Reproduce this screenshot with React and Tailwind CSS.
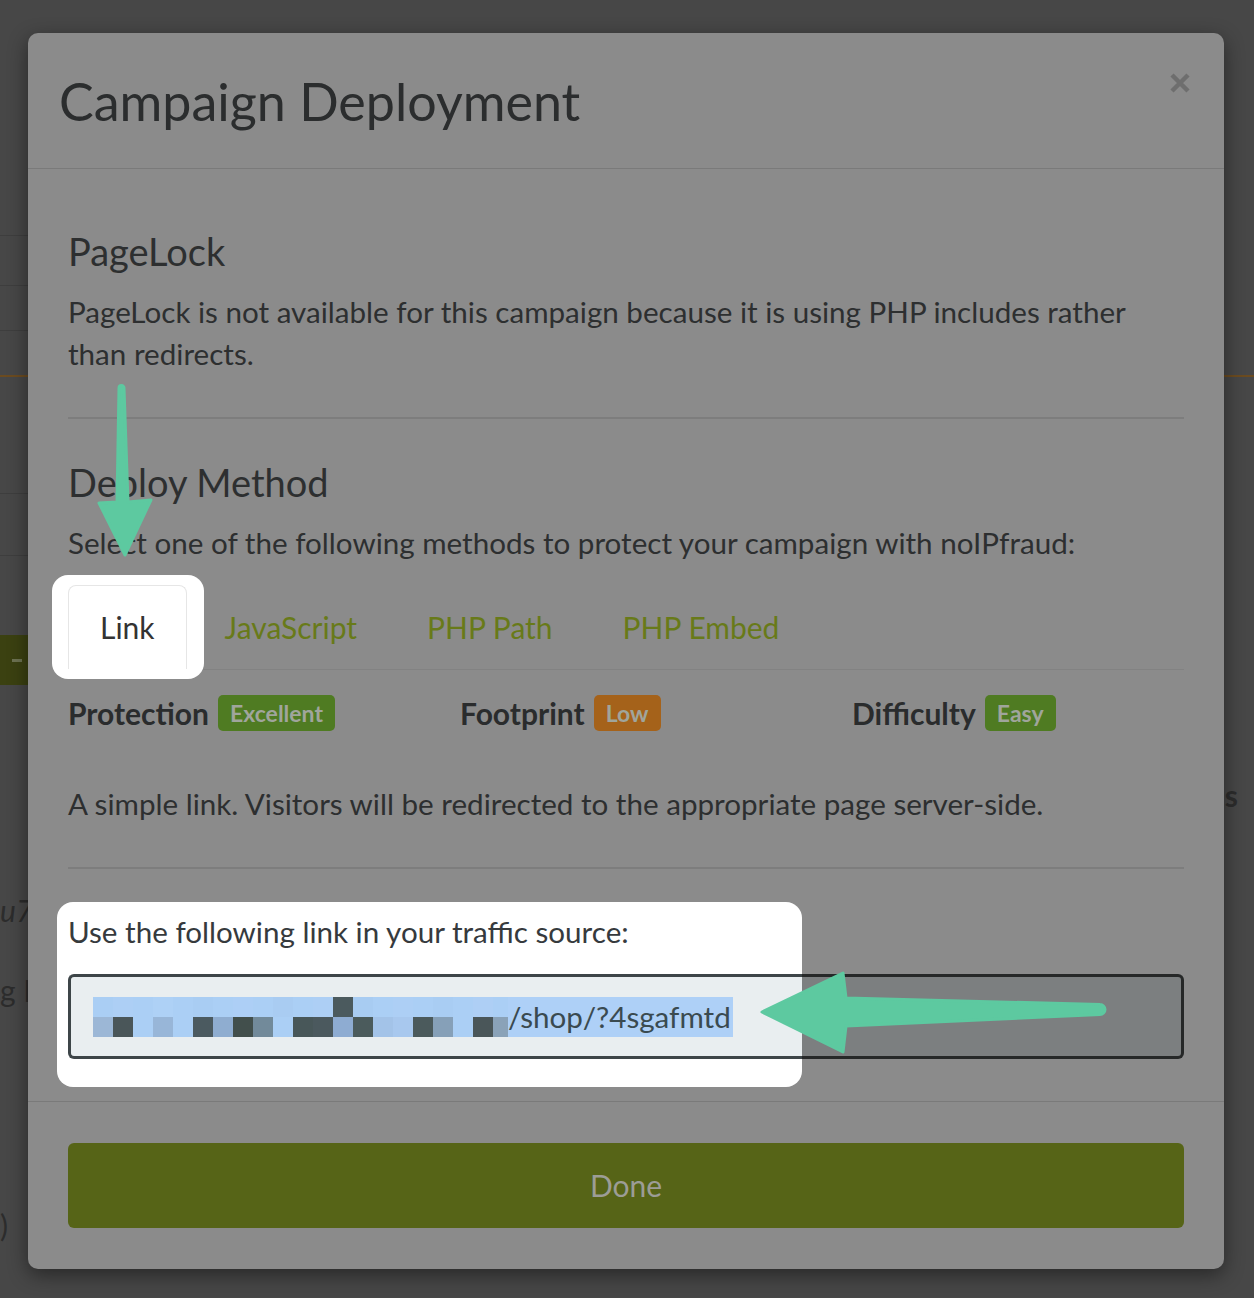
import React from "react";

const TOP_BLOCKS = [
  "bg-[#aacef4]", "bg-[#adcff5]", "bg-[#abcff5]", "bg-[#aed1f6]", "bg-[#abcff5]", "bg-[#a9cdf3]", "bg-[#abcff5]",
  "bg-[#adcff6]", "bg-[#abcff5]", "bg-[#a9ccf2]", "bg-[#abcff5]", "bg-[#adcff5]", "bg-[#4b5a5e]", "bg-[#a8ccf2]",
  "bg-[#abcff5]", "bg-[#adcff5]", "bg-[#abcff5]", "bg-[#a9cdf3]", "bg-[#abcff5]", "bg-[#aecff5]", "bg-[#abcff5]",
];
const BOTTOM_BLOCKS = [
  "bg-[#9cb7d6]", "bg-[#4a5659]", "bg-[#abcff5]", "bg-[#98b6d8]", "bg-[#abcff5]", "bg-[#4b5a60]", "bg-[#8fadd0]",
  "bg-[#424f4c]", "bg-[#728a9a]", "bg-[#abcff5]", "bg-[#485759]", "bg-[#4b595e]", "bg-[#8eacd2]", "bg-[#4b5b5c]",
  "bg-[#a3c3e8]", "bg-[#a8c8ee]", "bg-[#4b5a5c]", "bg-[#86a0b8]", "bg-[#abcff5]", "bg-[#4a5659]", "bg-[#8aa2b8]",
];

const TABS = ["JavaScript", "PHP Path", "PHP Embed"];

function Redacted() {
  return (
    <div className="flex flex-col">
      {[TOP_BLOCKS, BOTTOM_BLOCKS].map((row, r) => (
        <div key={r} className="flex">
          {row.map((c, i) => (
            <span key={i} className={`${c} h-[20px] ${i === row.length - 1 ? "w-[15px]" : "w-[20px]"}`} />
          ))}
        </div>
      ))}
    </div>
  );
}

function Metric({ label, badge, badgeClass }) {
  return (
    <div className="w-[392px] shrink-0 flex items-center">
      <span className="text-[30px] leading-[42px] font-bold text-[#2a2c2d]">{label}</span>
      <span className={`ml-[9px] h-[36px] px-[12px] rounded-[5px] flex items-center text-[23px] font-bold text-[#a0a59c] ${badgeClass}`}>
        {badge}
      </span>
    </div>
  );
}

function Backdrop() {
  return (
    <div className="flex flex-col text-[#2c2c2c] text-[30px]">
      <div className="h-[235px]" />
      <div className="h-[50px] w-[300px] border-t border-[#3e3e3e]" />
      <div className="h-[45px] w-[300px] border-t border-[#3e3e3e]" />
      <div className="h-[45px] w-[300px] border-t border-[#3e3e3e]" />
      <div className="h-[118px] border-t-2 border-[#6b4b20]" />
      <div className="h-[62px] w-[300px] border-t border-[#3e3e3e]" />
      <div className="h-[80px] w-[300px] border-t border-[#3e3e3e]" />
      <div className="h-[50px] w-[400px] bg-[#3b4111] flex items-center pl-[12px]">
        <span className="w-[10px] h-[3px] bg-[#6d7252]" />
      </div>
      <div className="h-[90px]" />
      <div className="h-[40px] flex items-center justify-end pr-[16px] font-bold">s</div>
      <div className="h-[75px]" />
      <div className="h-[40px] flex items-center italic">u7</div>
      <div className="h-[40px]" />
      <div className="h-[40px] flex items-center">g P</div>
      <div className="h-[195px]" />
      <div className="h-[40px] flex items-center">)</div>
    </div>
  );
}

export default function App() {
  return (
    <div className="relative w-[1254px] h-[1298px] overflow-hidden bg-[#474747] font-['Lato','Open_Sans',sans-serif]">
      <Backdrop />

      {/* modal */}
      <div className="absolute left-[28px] top-[33px] w-[1196px] rounded-[10px] bg-[#8b8b8b] shadow-[0_6px_20px_rgba(0,0,0,0.45)] flex flex-col">
        <div className="relative h-[136px] border-b border-[#7a7a7a] px-[31px] flex items-center">
          <h1 className="text-[52px] leading-[62px] text-[#2b2d2e]">Campaign Deployment</h1>
          <svg className="absolute left-[1141px] top-[39px]" width="22" height="22" viewBox="0 0 22 22">
            <path d="M3 3 L19 19 M19 3 L3 19" stroke="#6e6e6e" strokeWidth="4.5" />
          </svg>
        </div>

        <div className="px-[40px] pt-[60px] pb-[42px] flex flex-col text-[#2d2f30]">
          <h3 className="text-[38px] leading-[44px]">PageLock</h3>
          <p className="mt-[18px] text-[29.6px] leading-[42px]">
            PageLock is not available for this campaign because it is using PHP includes rather than redirects.
          </p>
          <div className="mt-[42px] h-[2px] bg-[#7d7d7d]" />

          <h3 className="mt-[41px] text-[38px] leading-[44px]">Deploy Method</h3>
          <p className="mt-[18px] text-[29.6px] leading-[42px]">
            Select one of the following methods to protect your campaign with noIPfraud:
          </p>

          <div className="relative mt-[21px] flex gap-[6px] border-b border-[#828282]">
            <div className="absolute left-[-16px] top-[-10px] w-[152px] h-[104px] rounded-[16px] bg-white" />
            <div className="relative z-10 h-[84px] px-[31px] flex items-center rounded-t-[8px] border border-b-0 border-[#e6e6e6] text-[30px] text-[#333]">
              Link
            </div>
            {TABS.map((t) => (
              <div key={t} className="relative z-10 h-[84px] px-[32px] flex items-center text-[30px] text-[#687a19]">
                {t}
              </div>
            ))}
          </div>

          <div className="mt-[22px] flex">
            <Metric label="Protection" badge="Excellent" badgeClass="bg-[#4f7b22]" />
            <Metric label="Footprint" badge="Low" badgeClass="bg-[#a5621a]" />
            <Metric label="Difficulty" badge="Easy" badgeClass="bg-[#4f7b22]" />
          </div>

          <p className="mt-[49px] text-[29.6px] leading-[42px]">
            A simple link. Visitors will be redirected to the appropriate page server-side.
          </p>
          <div className="mt-[42px] h-[2px] bg-[#7d7d7d]" />

          <div className="relative mt-[42px] flex flex-col">
            <div className="absolute left-[-11px] top-[-9px] w-[745px] h-[185px] rounded-[16px] bg-white" />
            <label className="relative z-10 text-[29.6px] leading-[42px] text-[#363a3d]">
              Use the following link in your traffic source:
            </label>
            <div className="relative z-10 mt-[21px] h-[85px] flex">
              <div className="w-[734px] border-[3px] border-r-0 border-[#3d4548] rounded-l-[6px] bg-[#e9eef0] flex items-center pl-[22px]">
                <Redacted />
                <span className="bg-[#aed0f7] text-[29.6px] leading-[40px] text-[#3a4a50] pr-[2px]">/shop/?4sgafmtd</span>
              </div>
              <div className="flex-1 border-[3px] border-l-0 border-[#262828] rounded-r-[6px] bg-[#7c7f80]" />
            </div>
          </div>
        </div>

        <div className="border-t border-[#7a7a7a] px-[40px] pt-[41px] pb-[41px]">
          <button className="w-full h-[85px] rounded-[6px] bg-[#566417] flex items-center justify-center text-[30px] text-[#9c9d96]">
            Done
          </button>
        </div>
      </div>

      {/* annotation arrows */}
      <svg className="absolute left-0 top-0 z-20 pointer-events-none" width="1254" height="1298" viewBox="0 0 1254 1298">
        <path
          d="M119 388 A2.5 2.5 0 0 1 124 388 L128 502 L151 500 L125 555 L99 503 L117 502 Z"
          fill="#5dc9a0"
          stroke="#5dc9a0"
          strokeWidth="3"
          strokeLinejoin="round"
        />
        <path
          d="M762 1012 L843 973 L846 998 L1100 1004.5 A5 5 0 0 1 1100 1014.5 L846 1026 L843 1052 Z"
          fill="#5dc9a0"
          stroke="#5dc9a0"
          strokeWidth="3"
          strokeLinejoin="round"
        />
      </svg>
    </div>
  );
}
